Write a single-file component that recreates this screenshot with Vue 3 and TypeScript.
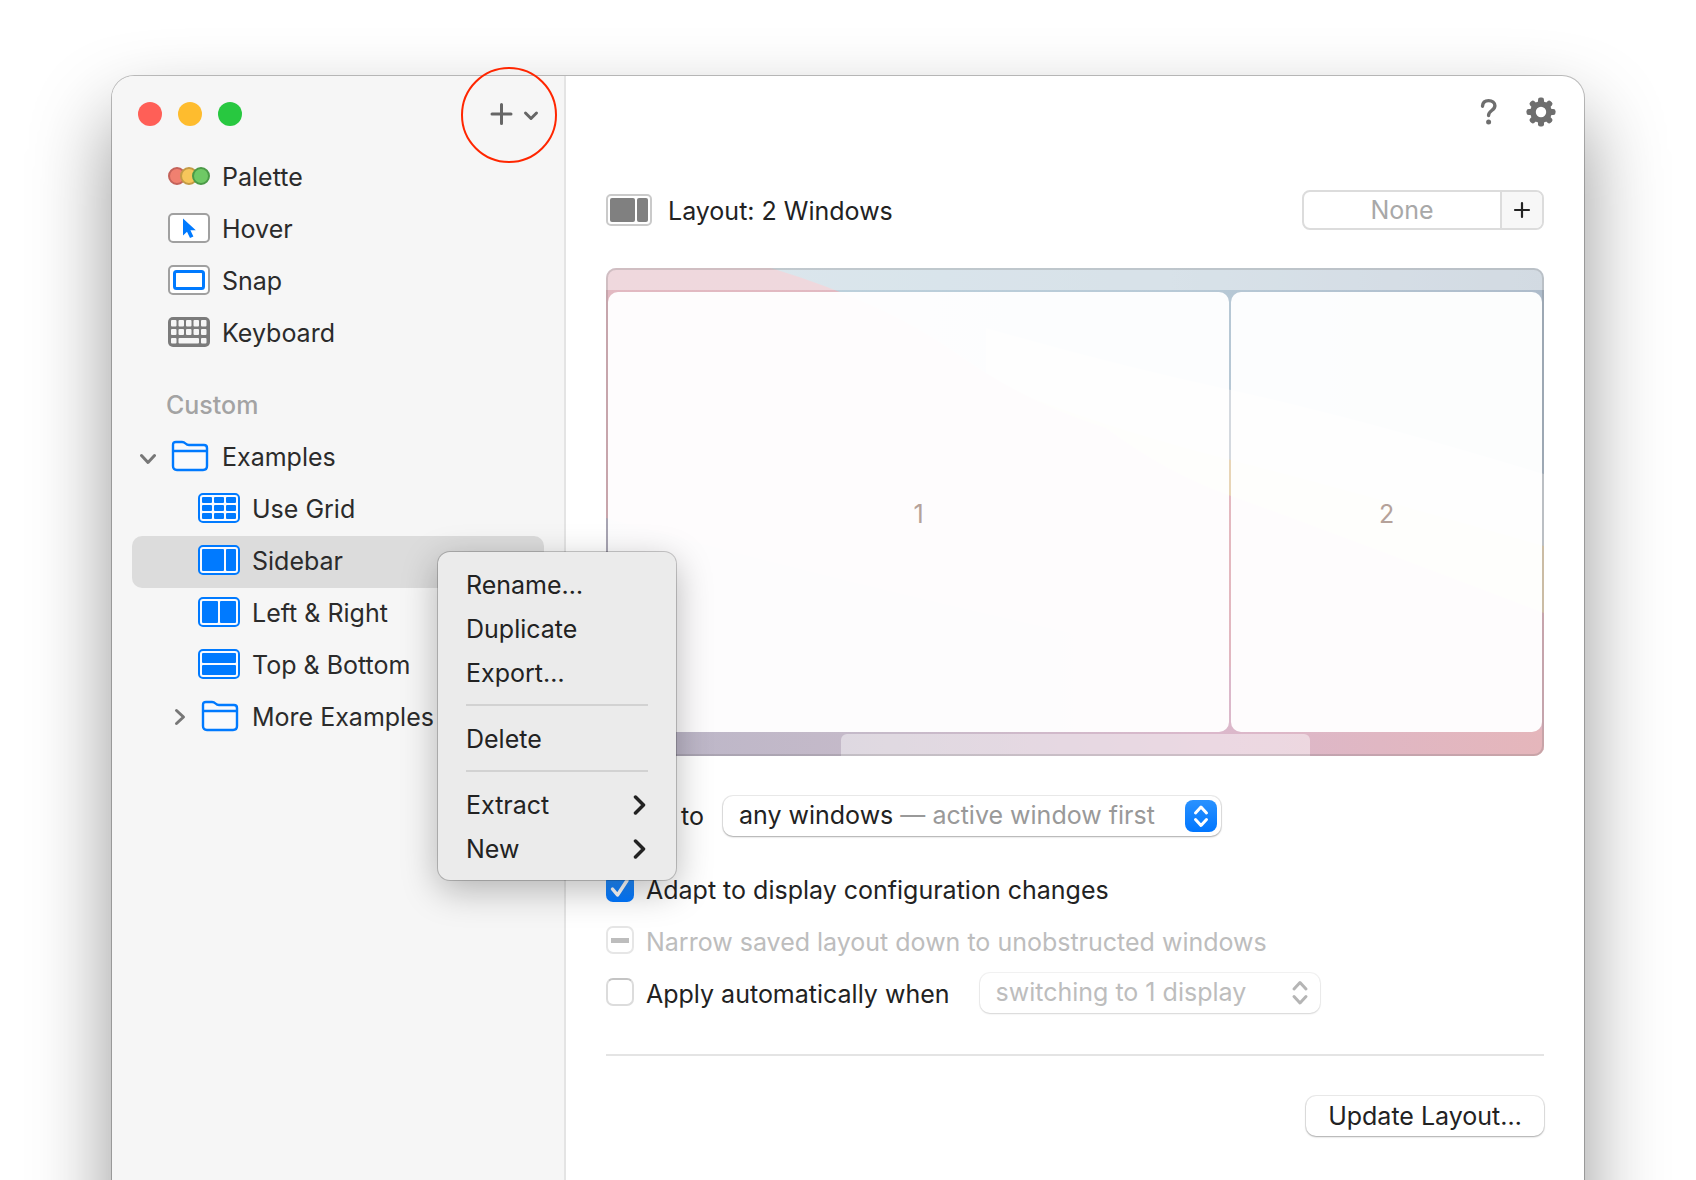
<script setup lang="ts">
import { ref } from 'vue'

interface Tool { id: string; label: string }
interface LayoutItem { id: string; label: string; panes: number[][] }

const tools: Tool[] = [
  { id: 'palette', label: 'Palette' },
  { id: 'hover', label: 'Hover' },
  { id: 'snap', label: 'Snap' },
  { id: 'keyboard', label: 'Keyboard' },
]

// Panes are x, y, width, height inside the 42 x 30 screen icon
const layouts: LayoutItem[] = [
  {
    id: 'grid',
    label: 'Use Grid',
    panes: [
      [4, 4, 10, 6], [16, 4, 10, 6], [28, 4, 10, 6],
      [4, 12, 10, 6], [16, 12, 10, 6], [28, 12, 10, 6],
      [4, 20, 10, 6], [16, 20, 10, 6], [28, 20, 10, 6],
    ],
  },
  { id: 'sidebar', label: 'Sidebar', panes: [[4, 4, 22, 22], [28, 4, 10, 22]] },
  { id: 'left-right', label: 'Left & Right', panes: [[4, 4, 16, 22], [22, 4, 16, 22]] },
  { id: 'top-bottom', label: 'Top & Bottom', panes: [[4, 4, 34, 10], [4, 16, 34, 10]] },
]

const menuGroups = [
  [{ label: 'Rename…', sub: false }, { label: 'Duplicate', sub: false }, { label: 'Export…', sub: false }],
  [{ label: 'Delete', sub: false }],
  [{ label: 'Extract', sub: true }, { label: 'New', sub: true }],
]

const keyColumns = [3, 10.5, 18, 25.5, 33]

const selected = ref('sidebar')
const adapt = ref(true)
const auto = ref(false)
</script>

<template>
  <div class="stage">
    <div class="window">
      <aside class="sidebar">
        <header class="titlebar">
          <div class="lights">
            <button class="light close" aria-label="Close"></button>
            <button class="light minimize" aria-label="Minimize"></button>
            <button class="light zoom" aria-label="Zoom"></button>
          </div>
          <button class="add" aria-label="Add">
            <svg width="50" height="24" viewBox="0 0 50 24" fill="none" stroke="#666" stroke-width="3" stroke-linecap="round" stroke-linejoin="round">
              <path d="M11.500 2.500v19M2 12h19" />
              <path d="M35.500 11l5.500 5.500 5.500-5.500" />
            </svg>
            <span class="ring"></span>
          </button>
        </header>

        <ul class="tree">
          <li v-for="t in tools" :key="t.id">
            <button class="row level-1">
              <svg v-if="t.id === 'palette'" width="42" height="30" viewBox="0 0 42 30" stroke-width="2">
                <circle cx="9" cy="15" r="8" fill="#f08070" stroke="#c4625a" />
                <circle cx="21" cy="15" r="8" fill="#f6c65b" stroke="#c39a45" />
                <circle cx="33" cy="15" r="8" fill="#6fc965" stroke="#4b9a47" />
              </svg>
              <svg v-else-if="t.id === 'hover'" width="42" height="30" viewBox="0 0 42 30">
                <rect x="1" y="1" width="40" height="28" rx="4" fill="#fff" stroke="#a0a0a0" stroke-width="2" />
                <path d="M15 5.500v17l4-3.800 3 6.300 3.400-1.500-3-6.200h5.400z" fill="#007aff" />
              </svg>
              <svg v-else-if="t.id === 'snap'" width="42" height="30" viewBox="0 0 42 30" fill="#fff">
                <rect x="1" y="1" width="40" height="28" rx="4" stroke="#a0a0a0" stroke-width="2" />
                <rect x="6.500" y="6.500" width="29" height="17" rx="2" stroke="#007aff" stroke-width="3" />
              </svg>
              <svg v-else width="42" height="30" viewBox="0 0 42 30">
                <rect x="0" y="0" width="42" height="30" rx="5" fill="#7b7b7b" />
                <g fill="#f6f6f6">
                  <template v-for="x in keyColumns" :key="x">
                    <rect :x="x" y="3" width="5.500" height="6.500" rx="1" />
                    <rect :x="x" y="12" width="5.500" height="6" rx="1" />
                  </template>
                  <rect x="3" y="21" width="5.500" height="5.500" rx="1" />
                  <rect x="10.500" y="21" width="20.500" height="5.500" rx="1" />
                  <rect x="33" y="21" width="5.500" height="5.500" rx="1" />
                </g>
              </svg>
              {{ t.label }}
            </button>
          </li>
        </ul>

        <h2 class="section">Custom</h2>

        <ul class="tree">
          <li>
            <button class="row level-1 folder">
              <svg class="twist" width="16" height="30" viewBox="0 0 16 30"><path d="M1.500 14.500l6.500 7 6.500-7" /></svg>
              <svg width="36" height="30" viewBox="0 0 36 30" class="folder-icon"><path d="M1 25V4q0-3 3-3h6q2 0 3.500 1.500T17 4h15q3 0 3 3v18q0 4-4 4H5q-4 0-4-4zM1 10h34" /></svg>
              Examples
            </button>
          </li>
          <li v-for="l in layouts" :key="l.id" class="item">
            <button class="row level-2" :class="{ selected: selected === l.id }" @click="selected = l.id">
              <svg width="42" height="30" viewBox="0 0 42 30">
                <rect x="1" y="1" width="40" height="28" rx="4" fill="#f8faff" stroke="#007aff" stroke-width="2" />
                <rect v-for="(p, i) in l.panes" :key="i" :x="p[0]" :y="p[1]" :width="p[2]" :height="p[3]" rx="1" fill="#007aff" />
              </svg>
              {{ l.label }}
            </button>
            <div v-if="l.id === 'sidebar'" class="menu" role="menu">
              <div v-for="(g, gi) in menuGroups" :key="gi" class="group">
                <button v-for="m in g" :key="m.label" class="menu-item" role="menuitem">
                  {{ m.label }}
                  <svg v-if="m.sub" width="15" height="20" viewBox="0 0 15 20"><path d="M2.500 2l8 8-8 8" /></svg>
                </button>
              </div>
            </div>
          </li>
          <li>
            <button class="row level-2 folder">
              <svg class="twist" width="16" height="30" viewBox="0 0 16 30"><path d="M6.500 9.500l7 6.500-7 6.500" /></svg>
              <svg width="36" height="30" viewBox="0 0 36 30" class="folder-icon"><path d="M1 25V4q0-3 3-3h6q2 0 3.500 1.500T17 4h15q3 0 3 3v18q0 4-4 4H5q-4 0-4-4zM1 10h34" /></svg>
              More Examples
            </button>
          </li>
        </ul>
      </aside>

      <main class="content">
        <header class="toolbar">
          <button class="tool" aria-label="Help">
            <svg width="18" height="28" viewBox="0 0 18 28" fill="none" stroke="#6e6e6e" stroke-width="3.400" stroke-linecap="round">
              <path d="M2.500 8.200C2.700 4.500 5 2.600 8.600 2.600s6.300 2 6.300 5.200c0 4.700-6.300 4.700-6.300 9.300v.4" />
              <circle cx="8.600" cy="24" r="2.500" fill="#6e6e6e" stroke="none" />
            </svg>
          </button>
          <button class="tool" aria-label="Settings">
            <svg width="30" height="30" viewBox="-15 -15 30 30">
              <g fill="#6e6e6e">
                <rect v-for="a in [0, 45, 90, 135]" :key="a" x="-3" y="-14.500" width="6" height="29" rx="2.200" :transform="`rotate(${a})`" />
              </g>
              <circle r="8" fill="#fff" stroke="#6e6e6e" stroke-width="5.600" />
            </svg>
          </button>
        </header>

        <div class="heading">
          <svg width="46" height="32" viewBox="0 0 46 32">
            <rect x="1" y="1" width="44" height="30" rx="4" fill="#fff" stroke="#cacaca" stroke-width="2" />
            <rect x="4" y="4" width="25" height="24" rx="2" fill="#808080" />
            <rect x="31" y="4" width="11" height="24" rx="2" fill="#808080" />
          </svg>
          <h1>Layout: 2 Windows</h1>
          <div class="shortcut">
            <input type="text" placeholder="None" aria-label="Shortcut" />
            <button aria-label="Record shortcut">
              <svg width="18" height="18" viewBox="0 0 18 18" stroke="#222" stroke-width="2.200" stroke-linecap="round"><path d="M9 2v14M2 9h14" /></svg>
            </button>
          </div>
        </div>

        <section class="preview" aria-label="Layout preview">
          <svg class="wallpaper" viewBox="0 0 938 488" preserveAspectRatio="none" aria-hidden="true">
            <defs>
              <linearGradient id="sky" x1="0" y1="0" x2="1" y2="0">
                <stop offset="0" stop-color="#bfd4df" />
                <stop offset=".6" stop-color="#b8cad7" />
                <stop offset="1" stop-color="#aebccb" />
              </linearGradient>
              <linearGradient id="low" gradientUnits="userSpaceOnUse" x1="0" y1="488" x2="938" y2="488">
                <stop offset="0" stop-color="#bab6c8" />
                <stop offset=".3" stop-color="#c6bac9" />
                <stop offset=".65" stop-color="#dbb8cb" />
                <stop offset="1" stop-color="#e5b6bb" />
              </linearGradient>
              <linearGradient id="rose" x1="0" y1="0" x2="0" y2="1">
                <stop offset="0" stop-color="#e2b9c2" />
                <stop offset=".6" stop-color="#e4b8bf" />
                <stop offset="1" stop-color="#dfb6c2" />
              </linearGradient>
            </defs>
            <rect width="938" height="488" fill="url(#sky)" />
            <path d="M380 60Q500 95 625 122T938 206V488H380z" fill="#d4d9df" />
            <path d="M400 120Q500 160 625 192T938 278V488H400z" fill="#e8d5b6" />
            <path d="M0 0H165Q280 35 350 85T500 160Q560 205 625 228T938 345V488H0z" fill="url(#rose)" />
            <path d="M0 250Q180 300 400 350T938 462V488H0z" fill="url(#low)" />
          </svg>
          <div class="menubar"></div>
          <div class="panes">
            <div class="pane first">1</div>
            <div class="pane second">2</div>
          </div>
          <div class="dock"></div>
        </section>

        <div class="apply">
          <label for="target">Apply to</label>
          <div class="popup wide">
            <span class="popup-text" aria-hidden="true">any windows <i>— active window first</i></span>
            <select id="target"><option>any windows — active window first</option></select>
            <svg class="stepper blue" width="32" height="32" viewBox="0 0 32 32"><path d="M10.500 13L16 7l5.500 6M10.500 19.500l5.500 6 5.500-6" /></svg>
          </div>
        </div>

        <div class="options">
          <label class="option"><input v-model="adapt" type="checkbox" />Adapt to display configuration changes</label>
          <label class="option off"><input type="checkbox" disabled class="mixed" />Narrow saved layout down to unobstructed windows</label>
          <div class="option-row">
            <label class="option"><input v-model="auto" type="checkbox" />Apply automatically when</label>
            <div class="popup off">
              <span class="popup-text" aria-hidden="true">switching to 1 display</span>
              <select disabled aria-label="Trigger"><option>switching to 1 display</option></select>
              <svg class="stepper" width="32" height="32" viewBox="0 0 32 32"><path d="M10 12l6-6.500 6 6.500M10 19.500l6 6.500 6-6.500" /></svg>
            </div>
          </div>
        </div>

        <hr />
        <footer><button class="update">Update Layout…</button></footer>
      </main>
    </div>
  </div>
</template>

<style>
body {
  margin: 0;
  background: #fff;
}
</style>

<style scoped>
* {
  box-sizing: border-box;
}
.stage {
  height: 100vh;
  overflow: hidden;
  padding: 76px 112px 0;
  font: 25px/32px Inter, "Liberation Sans", sans-serif;
  color: #222;
}
button,
input,
select {
  font: inherit;
  color: inherit;
  margin: 0;
  padding: 0;
  border: 0;
  background: none;
}
svg {
  flex: none;
  display: block;
}
.window {
  display: flex;
  min-height: calc(100vh + 60px);
  border-radius: 22px;
  background: #fff;
  box-shadow: 0 0 0 1px rgba(0, 0, 0, 0.24), 0 40px 80px rgba(0, 0, 0, 0.42);
}
.sidebar {
  width: 454px;
  flex: none;
  padding: 0 20px;
  border-right: 2px solid #e4e4e4;
  border-radius: 22px 0 0 22px;
  background: #f6f6f6;
  color: #2b2b2b;
}
.titlebar {
  display: flex;
  align-items: center;
  justify-content: space-between;
  height: 76px;
  padding-left: 6px;
}
.lights {
  display: flex;
  gap: 16px;
}
.light {
  width: 24px;
  height: 24px;
  border-radius: 50%;
}
.close {
  background: #ff5f57;
}
.minimize {
  background: #febc2e;
}
.zoom {
  background: #28c840;
}
.add {
  position: relative;
  margin-right: 4px;
}
.ring {
  position: absolute;
  top: -35px;
  left: -29px;
  width: 96px;
  height: 96px;
  border: 2px solid #ff2600;
  border-radius: 50%;
}
.tree {
  list-style: none;
  margin: 0;
  padding: 0;
}
.item {
  position: relative;
}
.row {
  display: flex;
  align-items: center;
  gap: 12px;
  width: 100%;
  height: 52px;
  padding-bottom: 2px;
  border-radius: 10px;
  text-align: left;
  white-space: nowrap;
}
.row svg {
  margin-bottom: 2px;
}
.level-1 {
  padding-left: 36px;
}
.level-2 {
  padding-left: 66px;
}
.level-1.folder {
  padding-left: 8px;
}
.level-2.folder {
  padding-left: 38px;
}
.folder .twist {
  margin-right: 4px;
}
.folder .folder-icon {
  margin-right: 2px;
}
.twist {
  fill: none;
  stroke: #777;
  stroke-width: 3;
  stroke-linecap: round;
  stroke-linejoin: round;
}
.folder-icon {
  fill: #f9fafc;
  stroke: #007aff;
  stroke-width: 2.4;
  overflow: visible;
}
.selected {
  background: #dcdcdc;
}
.section {
  margin: 20px 0 0 34px;
  height: 52px;
  font: 500 25px/50px Inter, "Liberation Sans", sans-serif;
  color: #a3a3a3;
}
.menu {
  position: absolute;
  z-index: 2;
  top: 16px;
  left: 306px;
  width: 238px;
  padding: 11px 28px 9px;
  border-radius: 12px;
  background: #ebebeb;
  color: #222;
  box-shadow: 0 0 0 1px rgba(0, 0, 0, 0.2), 0 10px 36px rgba(0, 0, 0, 0.28);
}
.group + .group {
  margin-top: 9px;
  padding-top: 11px;
  border-top: 2px solid #d2d2d2;
}
.menu-item {
  display: flex;
  align-items: center;
  justify-content: space-between;
  width: 100%;
  height: 44px;
  text-align: left;
}
.menu-item svg {
  fill: none;
  stroke: #222;
  stroke-width: 3.5;
  stroke-linecap: round;
  stroke-linejoin: round;
}
.content {
  flex: 1;
  min-width: 0;
  padding: 0 40px;
}
.toolbar {
  display: flex;
  align-items: center;
  justify-content: flex-end;
  gap: 28px;
  height: 72px;
  margin-right: -12px;
}
.heading {
  display: flex;
  align-items: center;
  height: 40px;
  margin-top: 42px;
}
h1 {
  flex: 1;
  margin: 0 0 0 16px;
  padding-top: 2px;
  font: inherit;
}
.shortcut {
  display: flex;
  width: 242px;
  height: 40px;
  border: 2px solid #dcdcdc;
  border-radius: 8px;
  overflow: hidden;
}
.shortcut input {
  flex: 1;
  min-width: 0;
  text-align: center;
}
.shortcut input::placeholder {
  color: #a8a8a8;
  opacity: 1;
}
.shortcut button {
  display: grid;
  place-items: center;
  width: 42px;
  border-left: 2px solid #dcdcdc;
  background: #f7f7f7;
}
.preview {
  position: relative;
  display: flex;
  flex-direction: column;
  margin-top: 38px;
  aspect-ratio: 938 / 488;
  border-radius: 10px;
  overflow: hidden;
  isolation: isolate;
}
.preview::after {
  content: "";
  position: absolute;
  inset: 0;
  border: 2px solid rgba(100, 100, 100, 0.22);
  border-radius: 10px;
}
.wallpaper {
  position: absolute;
  inset: 0;
  z-index: -1;
  width: 100%;
  height: 100%;
}
.menubar {
  height: 22px;
  background: rgba(255, 255, 255, 0.45);
}
.panes {
  flex: 1;
  display: flex;
  gap: 2px;
  padding: 2px;
}
.pane {
  display: grid;
  place-items: center;
  padding-top: 4px;
  border-radius: 10px;
  background: rgba(255, 255, 255, 0.96);
  color: #b5a29a;
}
.first {
  flex: 2;
}
.second {
  flex: 1;
}
.dock {
  align-self: center;
  width: 50%;
  height: 22px;
  border-radius: 6px 6px 0 0;
  background: rgba(255, 255, 255, 0.45);
}
.apply {
  display: flex;
  align-items: center;
  gap: 16px;
  margin-top: 40px;
}
.apply label {
  min-width: 101px;
}
.popup {
  display: flex;
  position: relative;
  align-items: center;
  justify-content: space-between;
  width: 340px;
  height: 40px;
  padding: 0 4px 0 16px;
  border-radius: 10px;
  background: #fff;
  box-shadow: 0 0 0 1px rgba(0, 0, 0, 0.08), 0 1px 2px rgba(0, 0, 0, 0.28);
}
.popup.wide {
  width: 498px;
}
.popup-text {
  padding-bottom: 2px;
}
.popup-text i {
  font-style: normal;
  color: #999;
}
.popup select {
  position: absolute;
  inset: 0;
  width: 100%;
  appearance: none;
  color: transparent;
}
.stepper {
  border-radius: 8px;
  fill: none;
  stroke: #b5b5b5;
  stroke-width: 3;
  stroke-linecap: round;
  stroke-linejoin: round;
}
.stepper.blue {
  stroke: #fff;
  background: linear-gradient(#2a92ff, #0076ff);
}
.popup.off {
  box-shadow: 0 0 0 1px rgba(0, 0, 0, 0.05), 0 1px 2px rgba(0, 0, 0, 0.12);
}
.off {
  color: #bdbdbd;
}
.options {
  margin-top: 27px;
}
.option-row {
  display: flex;
  align-items: center;
  gap: 30px;
}
.option {
  display: flex;
  align-items: center;
  gap: 12px;
  height: 52px;
  padding-top: 2px;
  white-space: nowrap;
}
.option input {
  appearance: none;
  width: 28px;
  height: 28px;
  margin-bottom: 4px;
  border: 2px solid #dcdcdc;
  border-top-color: #c4c4c4;
  border-radius: 7px;
  background: #fff;
}
.option input:checked {
  border: 0;
  background: url("data:image/svg+xml,%3Csvg xmlns='http://www.w3.org/2000/svg' viewBox='0 0 28 28' fill='none' stroke='white' stroke-width='3.500' stroke-linecap='round' stroke-linejoin='round'%3E%3Cpath d='M6.500 15l5 6L21 6.500'/%3E%3C/svg%3E"), linear-gradient(#2a92ff, #0076ff);
}
.option .mixed {
  border-color: #e6e6e6;
  background: linear-gradient(#bdbdbd, #bdbdbd) center / 18px 5px no-repeat;
}
hr {
  height: 2px;
  margin: 35px 0 0;
  border: 0;
  background: #e4e4e4;
}
footer {
  display: flex;
  justify-content: flex-end;
  margin-top: 40px;
}
.update {
  width: 238px;
  height: 40px;
  border-radius: 10px;
  background: #fff;
  box-shadow: 0 0 0 1px rgba(0, 0, 0, 0.08), 0 1px 2px rgba(0, 0, 0, 0.28);
}
</style>
